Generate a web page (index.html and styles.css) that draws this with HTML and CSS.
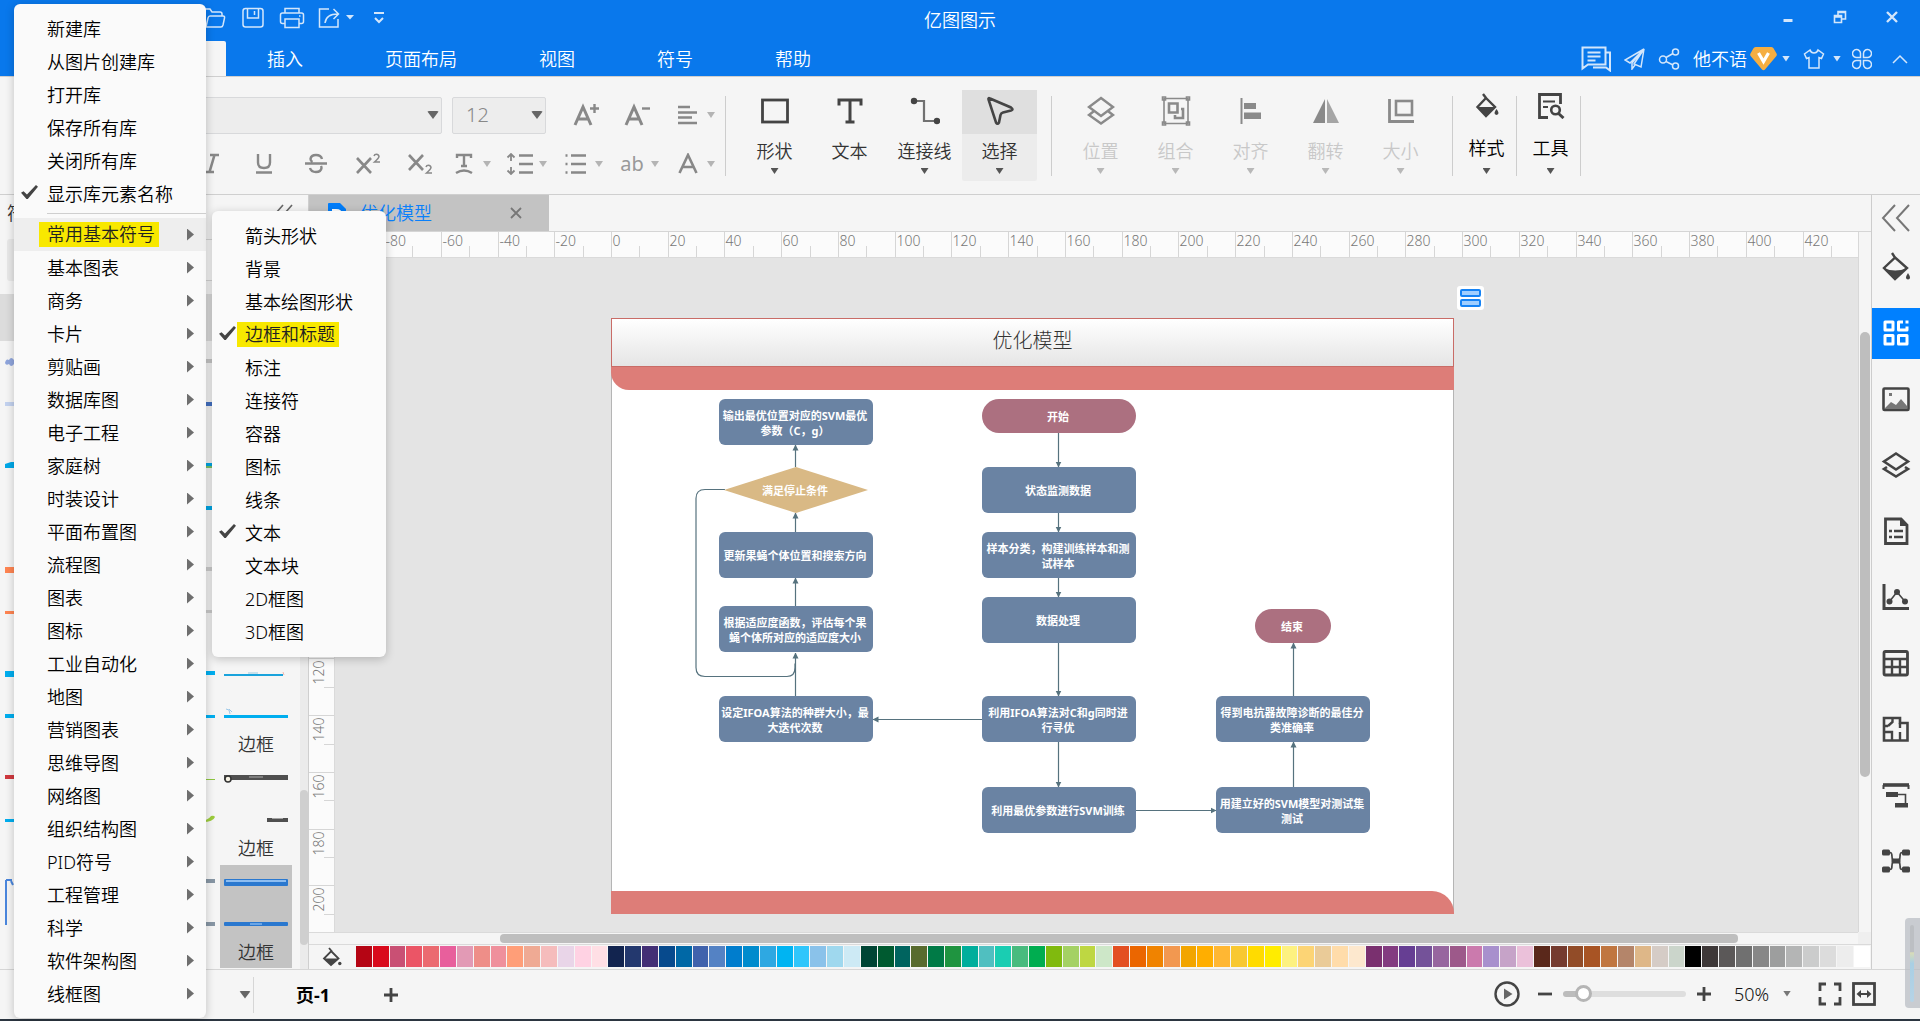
FILE: index.html
```html
<!DOCTYPE html>
<html lang="zh-CN">
<head>
<meta charset="utf-8">
<title>亿图图示</title>
<link rel="stylesheet" href="styles.css">
</head>
<body>
<div class="app">
  <header class="header">
    <div class="titlebar">
      <div class="quick">
        <button class="quick-btn" aria-label="打开"><svg width="24" height="22" viewBox="0 0 24 22"><path d="M2 18V3.500q0-1.500 1.500-1.500H8l2 3h8q2 0 2 2v2M4 20l2-9q.5-2 2-2h13q2 0 1.500 2l-1.500 7q-.5 2-2 2H4q-2 0-2-2"/></svg></button>
        <button class="quick-btn" aria-label="保存"><svg width="24" height="22" viewBox="0 0 24 22"><rect x="2" y="1.500" width="20" height="18.500" rx="2.500"/><path d="M6.500 2v9h11V2M13.500 4v4"/></svg></button>
        <button class="quick-btn" aria-label="打印"><svg width="26" height="22" viewBox="0 0 26 22"><path d="M6 6V1.500h14V6M6 16.500H3.500q-2 0-2-2V8q0-2 2-2h19q2 0 2 2v6.500q0 2-2 2H20M6 12h14v8.500H6zM20 9h1.500"/></svg></button>
        <button class="quick-btn wide" aria-label="导出"><svg width="36" height="22" viewBox="0 0 36 22"><path d="M11 2H1.500v18H20v-8M7 16q1-9 13-9M15.500 2l5 5-5 5"/><path class="solid" d="M28 8h8l-4 4.500z"/></svg></button>
        <button class="quick-btn narrow" aria-label="更多"><svg width="14" height="14" viewBox="0 0 14 14"><path d="M2 2h10M3 7l4 4 4-4" stroke-width="2"/></svg></button>
      </div>
      <h1 class="title">亿图图示</h1>
      <div class="window-btns">
        <button aria-label="最小化"><svg width="14" height="14" viewBox="0 0 14 14"><path d="M2.500 10.500h9" stroke-width="3"/></svg></button>
        <button aria-label="还原"><svg width="14" height="14" viewBox="0 0 14 14"><path d="M1.500 5.500h7v7h-7zM1.500 7h7M5 5V1.500h7.500V9H9M5 2.500h7" stroke-width="1.600"/></svg></button>
        <button aria-label="关闭"><svg width="14" height="14" viewBox="0 0 14 14"><path d="M2 2l10 10M12 2L2 12" stroke-width="2.400"/></svg></button>
      </div>
    </div>
    <div class="tabrow">
      <nav class="tabs">
        <a class="tab active" href="#start" aria-label="开始"></a>
        <a class="tab" href="#insert">插入</a>
        <a class="tab" href="#layout">页面布局</a>
        <a class="tab" href="#view">视图</a>
        <a class="tab" href="#symbol">符号</a>
        <a class="tab" href="#help">帮助</a>
      </nav>
      <div class="account">
        <button aria-label="评论"><svg width="30" height="26" viewBox="0 0 30 26"><path d="M1.500 22.500V1.500h23v17H7zM6.500 6.500h13M6.500 10.500h13M6.500 14.500h8M25 6.500h4v18l-4-3H12" stroke-width="2"/></svg></button>
        <button aria-label="发送"><svg width="21" height="22" viewBox="0 0 21 22"><path d="M20 1L1 12l5 3zM20 1l-3 18-7-3zM8 15v6l3-4M18 3L8 15"/></svg></button>
        <button aria-label="分享"><svg width="22" height="22" viewBox="0 0 22 22"><circle cx="5" cy="11.500" r="3.500"/><circle cx="17.500" cy="4" r="3"/><circle cx="17.500" cy="18" r="3"/><path d="M8 9.500l7-4M8 13.500l7 3.500"/></svg></button>
        <button class="user"><span>他不语</span><svg width="27" height="25" viewBox="0 0 27 25"><path class="gem" d="M6 1h15q1.500 0 2.500 1.300l3 5.200q.8 1.500-.3 2.700L15 23.500q-1.500 1.300-3 0L.8 10.200Q-.3 9 .5 7.500l3-5.200Q4.500 1 6 1z"/><path d="M8.500 7l5 8.500L18.500 7" stroke-width="3.200" class="white"/></svg><i class="caret"></i></button>
        <button class="skin" aria-label="皮肤"><svg width="22" height="22" viewBox="0 0 22 22"><path d="M7 2L1.500 6l2 4.500L6 9.500V20h10V9.500l2.500 1 2-4.500L15 2q-1 3-4 3T7 2z"/></svg><i class="caret"></i></button>
        <button aria-label="应用"><svg width="20" height="22" viewBox="0 0 20 22"><path d="M8.500 9.500H5A4 4 0 1 1 8.500 5.500zM11.500 9.500V5.500A4 4 0 1 1 15 9.500zM8.500 12.500v4A4 4 0 1 1 5 12.500zM11.500 12.500H15a4 4 0 1 1-3.500 4z"/></svg></button>
        <button class="collapse" aria-label="折叠功能区"><svg width="16" height="10" viewBox="0 0 16 10"><path d="M1 9l7-7 7 7"/></svg></button>
      </div>
    </div>
  </header>

  <section class="ribbon" aria-label="开始">
    <div class="font-group">
      <div class="font-row">
        <span class="combo font-name"><select aria-label="字体"><option></option></select><i class="caret big"></i></span>
        <span class="combo font-size"><select aria-label="字号"><option>12</option></select><i class="caret big"></i></span>
        <span class="row-tools first">
          <button class="tool" aria-label="增大字号"><svg width="26" height="24" viewBox="0 0 26 24"><path d="M2 22L10 4l8 18M5 16h10" stroke-width="3"/><path d="M21.500 1v9M17 5.500h9" stroke-width="2.400"/></svg></button>
          <button class="tool" aria-label="减小字号"><svg width="26" height="24" viewBox="0 0 26 24"><path d="M2 22L10 4l8 18M5 16h10" stroke-width="3"/><path d="M18 5.500h8" stroke-width="2.400"/></svg></button>
          <button class="tool drop" aria-label="对齐"><svg width="24" height="20" viewBox="0 0 24 20"><path d="M2 2h12M2 7.500h19M2 12.500h14M2 18h19" stroke-width="2.600"/></svg><i class="caret"></i></button>
        </span>
      </div>
      <div class="font-row second">
        <button class="tool mid" aria-label="斜体"><svg width="22" height="22" viewBox="0 0 22 22"><path d="M9 2h9M4 19h9M13.500 2L8.500 19" stroke-width="2.600"/></svg></button>
        <button class="tool mid" aria-label="下划线"><svg width="22" height="22" viewBox="0 0 22 22"><path d="M5 1v8.500q0 5.500 6 5.500t6-5.500V1M3 19.500h16" stroke-width="2.400"/></svg></button>
        <button class="tool mid" aria-label="删除线"><svg width="24" height="22" viewBox="0 0 24 22"><path d="M18 6q-1-4-6-4T6.500 6q0 2 2 3M1 10.500h22M6 15q1 4 6 4t5.500-4q0-1-.5-2" stroke-width="2.400"/></svg></button>
        <button class="tool mid" aria-label="上标"><svg width="26" height="22" viewBox="0 0 26 22"><path d="M2 5l14 15M16 5L2 20" stroke-width="2.600"/><path d="M19 3q.5-1.700 2.500-1.700T24 3.500Q24 5 19.500 9H25" stroke-width="1.500"/></svg></button>
        <button class="tool mid" aria-label="下标"><svg width="26" height="22" viewBox="0 0 26 22"><path d="M2 2l14 15M16 2L2 17" stroke-width="2.600"/><path d="M19 14q.5-1.700 2.500-1.700t2.500 2.200q0 1.500-4.500 5.500H25" stroke-width="1.500"/></svg></button>
        <span class="row-tools">
          <button class="tool drop" aria-label="文字样式"><svg width="20" height="22" viewBox="0 0 20 22"><path d="M3 5V2h14v3M10 2v11M7 13h6M2 20q8-5 16 0" stroke-width="2.400"/></svg><i class="caret"></i></button>
          <button class="tool drop" aria-label="行距"><svg width="28" height="22" viewBox="0 0 28 22"><path d="M13 2.500h14M13 11h14M13 19.500h14" stroke-width="2.600"/><path d="M5 1v7M5 14v7M1.500 4.500L5 1l3.500 3.500M1.500 17.500L5 21l3.500-3.500" stroke-width="1.800"/></svg><i class="caret"></i></button>
          <button class="tool drop" aria-label="项目符号"><svg width="24" height="22" viewBox="0 0 24 22"><path d="M7 2.500h15M7 11h15M7 19.500h15" stroke-width="2.400"/><path d="M1.500 2.500h2M1.500 11h2M1.500 19.500h2" stroke-width="2.400"/></svg><i class="caret"></i></button>
          <button class="tool drop" aria-label="大小写"><span class="ab">ab</span><i class="caret"></i></button>
          <button class="tool drop" aria-label="文字颜色"><svg width="20" height="22" viewBox="0 0 20 22"><path d="M1.500 20L10 2l8.500 18M4.500 14h11" stroke-width="2.600"/></svg><i class="caret"></i></button>
        </span>
      </div>
    </div>
    <i class="divider"></i>
    <div class="big-group">
      <button class="big"><span class="ico"><svg width="28" height="26" viewBox="0 0 28 26"><rect x="1.500" y="2" width="25" height="22" stroke-width="2.800"/></svg></span><span class="lbl">形状</span><i class="caret"></i></button>
      <button class="big"><span class="ico"><svg width="26" height="26" viewBox="0 0 26 26"><path d="M2 7.500V2h22v5.500M13 2v22M8.500 24h9" stroke-width="3"/></svg></span><span class="lbl">文本</span></button>
      <button class="big"><span class="ico"><svg width="30" height="28" viewBox="0 0 30 28"><path d="M4 4h10v20h10" stroke-width="2.200" class="soft"/><circle class="fill" cx="4" cy="4" r="3.200"/><circle class="fill" cx="27" cy="24" r="3.200"/></svg></span><span class="lbl">连接线</span><i class="caret"></i></button>
      <button class="big on"><span class="ico"><svg width="30" height="30" viewBox="0 0 30 30"><path d="M3.500 3.500Q3 1.500 5 2.500L26 11.500Q29 13.500 26 14.500L18 16.500Q16 17 15.500 19L14 26.500Q12.500 29 11 26.500z" stroke-width="2.600"/></svg></span><span class="lbl">选择</span><i class="caret"></i></button>
    </div>
    <i class="divider"></i>
    <div class="big-group off">
      <button class="big"><span class="ico"><svg width="30" height="30" viewBox="0 0 30 30"><path d="M15 2l12 9-12 9-12-9zM7.500 15.500L3 19l12 8.500L27 19l-4.500-3.500" stroke-width="2.400"/></svg></span><span class="lbl">位置</span><i class="caret"></i></button>
      <button class="big"><span class="ico"><svg width="30" height="30" viewBox="0 0 30 30"><path d="M3 2.500h24v25H3z" stroke-width="1.600"/><path d="M1.500 1h3v3h-3zM25.500 1h3v3h-3zM1.500 26h3v3h-3zM25.500 26h3v3h-3z" stroke-width="1.600"/><path d="M8 7.500h8.500v9H8zM20 13h2v9h-8v-3" stroke-width="2.600"/></svg></span><span class="lbl">组合</span><i class="caret"></i></button>
      <button class="big"><span class="ico"><svg width="26" height="28" viewBox="0 0 26 28"><path d="M3.500 1v26" stroke-width="2"/><rect class="fill" x="6" y="6" width="12" height="6"/><rect class="fill" x="6" y="15.500" width="17" height="6.500"/></svg></span><span class="lbl">对齐</span><i class="caret"></i></button>
      <button class="big"><span class="ico"><svg width="28" height="26" viewBox="0 0 28 26"><path class="fill" d="M13 1v24H1z"/><path class="fill soft" d="M15 1v24h12z"/></svg></span><span class="lbl">翻转</span><i class="caret"></i></button>
      <button class="big"><span class="ico"><svg width="28" height="26" viewBox="0 0 28 26"><path d="M2.500 1v22.500H27" stroke-width="2.800"/><rect x="9" y="3" width="16" height="14" stroke-width="2.600"/></svg></span><span class="lbl">大小</span><i class="caret"></i></button>
    </div>
    <i class="divider"></i>
    <div class="big-group slim">
      <button class="big"><span class="ico"><svg width="26" height="26" viewBox="0 0 26 26"><path d="M9 1l3 4-8.500 9L12 23l9-9-9-9" stroke-width="2.400"/><path class="fill" d="M3.500 14h17L12 23z"/><path class="fill" d="M22.500 16q4 5 0 6-4-1 0-6z"/></svg></span><span class="lbl">样式</span><i class="caret"></i></button>
      <i class="divider"></i>
      <button class="big"><span class="ico"><svg width="28" height="26" viewBox="0 0 28 26"><path d="M11 24.500H2.500v-23h21V11" stroke-width="2.800"/><path d="M6 8.500h12M6 14h5" stroke-width="2.200"/><circle cx="18.500" cy="17" r="4.300" stroke-width="2.600"/><path d="M21.500 20.500l5 4.500" stroke-width="3"/></svg></span><span class="lbl">工具</span><i class="caret"></i></button>
    </div>
    <i class="divider"></i>
  </section>

  <div class="workspace">
    <aside class="library">
      <div class="lib-head"><h2>符号库</h2><button aria-label="收起"><svg width="20" height="18" viewBox="0 0 20 18"><path d="M9 1L2 9l7 8M18 1l-7 8 7 8"/></svg></button></div>
      <div class="lib-search"><button aria-label="库"></button><input type="text" aria-label="搜索"></div>
      <div class="lib-cat"></div>
      <div class="lib-body">
        <div class="cards">
          <div class="card"><svg viewBox="0 0 64 72"><path d="M0 18q1-5 4-3 2-4 5 0 3-2 3 2t-3 2q-3 4-5 0-3 2-4-1" fill="#8fa5dc"/><rect y="57" width="64" height="4" fill="#c3d2ef"/></svg></div>
          <div class="card"></div>
          <div class="card"><svg viewBox="0 0 64 72"><rect y="14" width="64" height="4" fill="#c8c8c8"/><rect y="57" width="64" height="4" fill="#4472c4"/></svg></div>
          <div class="card"></div>

          <div class="card"><svg viewBox="0 0 64 72"><path d="M0 15l6-2h58v6H0z" fill="#00a8e8"/></svg></div>
          <div class="card"></div>
          <div class="card"><svg viewBox="0 0 64 72"><rect y="14" width="64" height="3" fill="#00a8e8"/><rect y="17" width="64" height="2" fill="#7cc36a"/><rect y="57" width="64" height="4" fill="#00a8e8"/></svg></div>
          <div class="card"></div>

          <div class="card"><svg viewBox="0 0 64 72"><rect y="14" width="64" height="6" fill="#ff8552"/><rect y="58" width="64" height="3" fill="#ff8552"/></svg></div>
          <div class="card"></div>
          <div class="card"><svg viewBox="0 0 64 72"><rect y="14" width="64" height="4" fill="#cfcfcf"/><rect y="57" width="64" height="3" fill="#cfcfcf"/></svg></div>
          <div class="card"></div>

          <div class="card"><svg viewBox="0 0 64 72"><rect y="14" width="64" height="6" fill="#00aeef"/><rect y="57" width="64" height="4" fill="#00aeef"/></svg></div>
          <div class="card"></div>
          <div class="card"><svg viewBox="0 0 64 72"><rect y="14" width="64" height="4" fill="#00aeef"/><rect y="58" width="64" height="3" fill="#00aeef"/></svg></div>
          <div class="card"><svg viewBox="0 0 64 72"><rect y="17" width="59" height="2" fill="#1aa3dc"/><path d="M24 16h10" stroke="#9ccbe0"/><path d="M59 15l1 3" stroke="#f0b8b0"/><rect y="58" width="64" height="3" fill="#00aeef"/><path d="M2 52l3 1 1 4M5 52l3 3" stroke="#9cc8e8" fill="none"/></svg><span>边框</span></div>

          <div class="card"><svg viewBox="0 0 64 72"><rect y="14" width="64" height="4" fill="#d0393f"/><rect y="58" width="64" height="3" fill="#00aeef"/></svg></div>
          <div class="card"></div>
          <div class="card"><svg viewBox="0 0 64 72"><rect y="18" width="64" height="1" fill="#8dc63f"/><path d="M52 60q6-2 8-5 3-1 4 1-2 5-12 5" fill="#9ccc3c"/></svg></div>
          <div class="card"><svg viewBox="0 0 64 72"><rect y="14" width="64" height="5" fill="#4f4f4f"/><path d="M25 16h14" stroke="#aaa"/><circle cx="4" cy="18" r="3" fill="#f6f2e4" stroke="#333" stroke-width="1.500"/><rect x="43" y="57" width="21" height="4" fill="#4f4f4f"/><path d="M48 57h11" stroke="#f5f5f5"/></svg><span>边框</span></div>

          <div class="card"><svg viewBox="0 0 64 72"><path d="M1 15v45M1 15h6M6 16l2 4" stroke="#4a86dc" stroke-width="2" fill="none"/></svg></div>
          <div class="card"></div>
          <div class="card"><svg viewBox="0 0 64 72"><rect y="14" width="64" height="4" fill="#8796a4"/><rect y="57" width="64" height="4" fill="#8796a4"/></svg></div>
          <div class="card selected"><svg viewBox="0 0 64 72"><rect y="14" width="64" height="7" rx="1" fill="#2a78cf"/><path d="M2 16h60" stroke="#8dbdf0" stroke-width="2"/><rect y="57" width="64" height="4" rx="1" fill="#2a78cf"/><path d="M26 59h12" stroke="#6aa5e6" stroke-width="2"/></svg><span>边框</span></div>
        </div>
        <div class="lib-track"><div class="lib-thumb"></div></div>
      </div>
    </aside>

    <main class="center">
      <div class="doc-tabs">
        <div class="doc-tab"><svg width="20" height="22" viewBox="0 0 20 22"><path d="M2 1h11l6 6v13q0 1-1 1H2q-1 0-1-1V2q0-1 1-1z" fill="#007dfa"/><path d="M6 8h3q5 0 5 4t-5 4H6z" fill="none" stroke="#fff" stroke-width="2"/></svg><span>优化模型</span><button aria-label="关闭文档"><svg width="12" height="12" viewBox="0 0 12 12"><path d="M1 1l10 10M11 1L1 11"/></svg></button></div>
      </div>
      <div class="stage">
        <svg class="ruler-h" id="ruler-h"></svg>
        <svg class="ruler-v" id="ruler-v"></svg>
        <div class="canvas">
          <div class="sheet">
            <div class="sheet-title">优化模型</div>
            <div class="sheet-band"></div>
            <div class="sheet-foot"></div>
            <svg class="links" width="843" height="596" viewBox="0 0 843 596">
              <defs><marker id="tip" viewBox="0 0 6 8" refX="5.500" refY="4" markerWidth="6" markerHeight="8" markerUnits="userSpaceOnUse" orient="auto"><path d="M0 1l6 3-6 3z"/></marker></defs>
              <path d="M184.500 149V127"/><path d="M184.500 214V195"/><path d="M184.500 288V260"/><path d="M184.500 378V335"/>
              <path class="plain" d="M114 171.500h-20q-9 0-9 9v169q0 9 9 9h82q8 0 8-9v-4"/>
              <path d="M447.500 115v34"/><path d="M447.500 195v19"/><path d="M447.500 260v19"/><path d="M447.500 325v53"/><path d="M447.500 424v45"/>
              <path d="M371 401.500H262"/><path d="M525 492.500h80"/><path d="M682.500 469v-45"/><path d="M682.500 378v-53"/>
            </svg>
            <div class="node n-out">输出最优位置对应的SVM最优参数（C，g）</div>
            <div class="node n-cond">满足停止条件</div>
            <div class="node n-update">更新果蝇个体位置和搜索方向</div>
            <div class="node n-eval">根据适应度函数，评估每个果蝇个体所对应的适应度大小</div>
            <div class="node n-init">设定IFOA算法的种群大小，最大迭代次数</div>
            <div class="node pill n-start">开始</div>
            <div class="node n-monitor">状态监测数据</div>
            <div class="node n-sample">样本分类，构建训练样本和测试样本</div>
            <div class="node n-process">数据处理</div>
            <div class="node n-ifoa">利用IFOA算法对C和g同时进行寻优</div>
            <div class="node n-train">利用最优参数进行SVM训练</div>
            <div class="node n-test">用建立好的SVM模型对测试集测试</div>
            <div class="node n-result">得到电抗器故障诊断的最佳分类准确率</div>
            <div class="node pill n-end">结束</div>
          </div>
          <button class="page-handle" aria-label="页面选项"><i></i><i></i></button>
        </div>
        <div class="vscroll"><div class="vthumb"></div></div>
        <div class="hscroll"><div class="hthumb"></div></div>
        <div class="corner"></div>
      </div>
      <div class="palette">
        <button class="bucket" aria-label="填充"><svg width="20" height="20" viewBox="0 0 20 20"><path d="M7 1l2.500 3L2 11.500 9 18l7.500-6.500L9 4" fill="none" stroke="#444" stroke-width="1.800"/><path d="M2 11.500h14.500L9 18z" fill="#444"/><circle cx="17.800" cy="16.500" r="1.700" fill="#444"/></svg></button>
        <div class="swatches" id="swatches"></div>
      </div>
    </main>

    <aside class="side">
      <button class="expand" aria-label="展开"><svg width="30" height="30" viewBox="0 0 30 30"><path d="M14 2L2 15l12 13M28 2L16 15l12 13" stroke-width="2" stroke="#777"/></svg></button>
      <button aria-label="填充"><svg width="30" height="30" viewBox="0 0 30 30"><path d="M11 1l3 4.500L3 16l11 11 12-11L14 5.500" stroke-width="2.400"/><path class="fill" d="M3 16q11 5 23 0L14 28z"/><path class="fill" d="M27 21q4 6 0 6.500-4-.5 0-6.500z"/></svg></button>
      <button class="on" aria-label="符号库"><svg width="30" height="30" viewBox="0 0 30 30"><path d="M4 4h8v8H4zM22 4h-4.500v8H26V8.500M4 17.500h8V26H4zM17.500 17.500H26V26h-8.500z" stroke-width="3" stroke-linejoin="round"/><path class="fill" d="M24.500 2.500h3v3h-3z"/></svg></button>
      <button aria-label="图片"><svg width="30" height="30" viewBox="0 0 30 30"><rect x="2.500" y="4.500" width="25" height="21.500" rx="1" stroke-width="2.600"/><path class="soft-fill" d="M4 24l6-6 5 3 5-6 6 7v3H4z"/><rect class="soft-fill" x="8" y="9" width="3" height="3"/></svg></button>
      <button aria-label="图层"><svg width="30" height="30" viewBox="0 0 30 30"><path d="M15 3.500l12 8-12 8-12-8zM6 17l-3 2 12 7.500L27 19l-3-2" stroke-width="2.600"/></svg></button>
      <button aria-label="备注"><svg width="30" height="30" viewBox="0 0 30 30"><path d="M4.500 3H20l6 6v18.500H4.500z" stroke-width="2.800"/><path class="fill" d="M19 3v7h7z"/><path d="M8 15h3M13 15h9M8 21h3M13 21h9" stroke-width="2.600"/></svg></button>
      <button aria-label="图表"><svg width="30" height="30" viewBox="0 0 30 30"><path d="M3 2v24.500h25" stroke-width="3"/><path d="M8.500 19.500L16 10l8 9.500" stroke-width="1.600"/><circle class="fill" cx="8.500" cy="19.500" r="3"/><circle class="fill" cx="16" cy="10" r="3"/><circle class="fill" cx="24" cy="19.500" r="3"/></svg></button>
      <button aria-label="表格"><svg width="30" height="30" viewBox="0 0 30 30"><rect x="3" y="3.500" width="23.500" height="23.500" rx="1.500" stroke-width="2.800"/><path d="M3 11h23.500M3 19h23.500M11 11v16M19 11v16" stroke-width="2.400"/></svg></button>
      <button aria-label="平面图"><svg width="30" height="30" viewBox="0 0 30 30"><path d="M3 4h16v5h7.500v17.500H3z" stroke-width="2.600"/><path d="M3 12h4M11.500 4v4l-4.500 4M19 9v5M3 18h8v8M19 18v8" stroke-width="2.400"/></svg></button>
      <button aria-label="甘特图"><svg width="30" height="30" viewBox="0 0 30 30"><path d="M2 5h26" stroke-width="3.600"/><path d="M2.500 5v4M27.500 5v4" stroke-width="2"/><rect class="fill" x="5" y="12" width="12" height="5"/><path d="M17 14.500h7.500V23" stroke-width="1.600"/><rect class="fill" x="14" y="23" width="13" height="4.500"/></svg></button>
      <button aria-label="思维导图"><svg width="30" height="30" viewBox="0 0 30 30"><path d="M6 6.500h3q2 0 2 4t3 4.500q-3 .5-3 4.500t-2 4H6M24 6.500h-3q-2 0-2 4t-3 4.500q3 .5 3 4.500t2 4h3" stroke-width="1.700"/><rect class="fill" x="1" y="3.500" width="8" height="6" rx="1.500"/><rect class="fill" x="21" y="3.500" width="8" height="6" rx="1.500"/><rect class="fill" x="1" y="20.500" width="8" height="6" rx="1.500"/><rect class="fill" x="21" y="20.500" width="8" height="6" rx="1.500"/><rect class="fill" x="10.500" y="12.500" width="9" height="5" rx="1.500"/></svg></button>
    </aside>
  </div>

  <footer class="status">
    <button class="page-list" aria-label="页面列表"><i class="caret big"></i></button>
    <button class="page-tab">页-1</button>
    <button class="page-add" aria-label="添加页面"><svg width="16" height="16" viewBox="0 0 16 16"><path d="M8 1v14M1 8h14"/></svg></button>
    <div class="zoom">
      <button class="play" aria-label="播放"><svg width="26" height="26" viewBox="0 0 26 26"><circle cx="13" cy="13" r="11.500"/><path d="M10 7.500l8.500 5.500-8.500 5.500z" fill="#666" stroke="none"/></svg></button>
      <button aria-label="缩小"><svg width="16" height="16" viewBox="0 0 16 16"><path d="M1 8h14"/></svg></button>
      <input type="range" min="0" max="100" value="11" aria-label="缩放">
      <button aria-label="放大"><svg width="16" height="16" viewBox="0 0 16 16"><path d="M8 1v14M1 8h14"/></svg></button>
      <span class="zoom-value"><select aria-label="缩放比例"><option>50%</option></select><i class="caret"></i></span>
      <button aria-label="全屏"><svg width="24" height="24" viewBox="0 0 24 24"><path d="M2 9V2h6M16 2h6v7M22 15v7h-6M8 22H2v-7"/></svg></button>
      <button class="fit" aria-label="适应宽度"><svg width="24" height="24" viewBox="0 0 24 24"><rect x="1.500" y="1.500" width="21" height="21"/><path d="M8 12h8" stroke-width="2"/><path d="M9 8v8l-4.500-4zM15 8v8l4.500-4z" fill="#444" stroke="none"/></svg></button>
    </div>
  </footer>
  <div class="taskbar"></div>

  <div class="meter" aria-hidden="true"><div class="meter-bar"></div></div>

  <div class="menu main-menu" role="menu">
    <button class="item">新建库</button>
    <button class="item">从图片创建库</button>
    <button class="item">打开库</button>
    <button class="item">保存所有库</button>
    <button class="item">关闭所有库</button>
    <button class="item checked">显示库元素名称</button>
    <hr>
    <button class="item sub hover"><mark>常用基本符号</mark></button>
    <button class="item sub">基本图表</button>
    <button class="item sub">商务</button>
    <button class="item sub">卡片</button>
    <button class="item sub">剪贴画</button>
    <button class="item sub">数据库图</button>
    <button class="item sub">电子工程</button>
    <button class="item sub">家庭树</button>
    <button class="item sub">时装设计</button>
    <button class="item sub">平面布置图</button>
    <button class="item sub">流程图</button>
    <button class="item sub">图表</button>
    <button class="item sub">图标</button>
    <button class="item sub">工业自动化</button>
    <button class="item sub">地图</button>
    <button class="item sub">营销图表</button>
    <button class="item sub">思维导图</button>
    <button class="item sub">网络图</button>
    <button class="item sub">组织结构图</button>
    <button class="item sub">PID符号</button>
    <button class="item sub">工程管理</button>
    <button class="item sub">科学</button>
    <button class="item sub">软件架构图</button>
    <button class="item sub">线框图</button>
  </div>
  <div class="menu sub-menu" role="menu">
    <button class="item">箭头形状</button>
    <button class="item">背景</button>
    <button class="item">基本绘图形状</button>
    <button class="item checked"><mark>边框和标题</mark></button>
    <button class="item">标注</button>
    <button class="item">连接符</button>
    <button class="item">容器</button>
    <button class="item">图标</button>
    <button class="item">线条</button>
    <button class="item checked">文本</button>
    <button class="item">文本块</button>
    <button class="item">2D框图</button>
    <button class="item">3D框图</button>
  </div>
</div>
<script src="app.js"></script>
</body>
</html>
```
FILE: styles.css
```css
* { box-sizing: border-box; }

body {
  margin: 0;
  font-family: "Noto Sans", "Noto Sans CJK SC", sans-serif;
  font-size: 18px;
  font-weight: 350;
  line-height: 24px;
  color: #111;
  background: #f5f5f5;
}

button, select, input {
  font: inherit;
  color: inherit;
  margin: 0;
  padding: 0;
  border: 0;
  border-radius: 0;
  background: none;
  appearance: none;
}

h1, h2 { margin: 0; font-size: 18px; font-weight: inherit; }
svg { display: block; flex: none; }

.app {
  position: relative;
  display: flex;
  flex-direction: column;
  min-height: 100vh;
  overflow: hidden;
}

.caret {
  flex: none;
  width: 8px;
  height: 6px;
  background: currentColor;
  clip-path: polygon(0 0, 100% 0, 50% 100%);
}
.caret.big { width: 12px; height: 8px; color: #666; }

/* Header */
.header { background: #0978ec; color: #fff; }
.header svg { fill: none; stroke: #d3e6fb; stroke-width: 1.5; }
.header .solid { fill: #d3e6fb; stroke: none; }
.header .white { stroke: #fff; }
.header .gem { fill: #f5ae42; stroke: none; }
.header .caret { color: #d3e6fb; }

.titlebar {
  display: grid;
  grid-template-columns: 1fr auto 1fr;
  height: 41px;
}
.quick { display: flex; padding-left: 194px; height: 36px; }
.quick-btn { width: 39px; display: flex; align-items: center; justify-content: center; }
.quick-btn.wide { width: 50px; }
.quick-btn.narrow { width: 36px; }
.title { line-height: 40px; }
.window-btns { display: flex; justify-content: flex-end; height: 34px; padding-right: 2px; }
.window-btns button { width: 52px; display: flex; align-items: center; justify-content: center; }

.tabrow { display: flex; justify-content: space-between; height: 35px; }
.tabs { display: flex; padding-left: 108px; }
.tab { padding: 0 41px; line-height: 37px; color: #fff; text-decoration: none; }
.tab.active { width: 118px; background: #f5f5f5; border-top-right-radius: 2px; }
.account { display: flex; align-items: center; gap: 13px; padding-right: 12px; }
.user, .skin { display: flex; align-items: center; gap: 8px; }
.user { gap: 5px; }
.user span { margin-right: -2px; }
.skin { margin-right: -2px; }
.collapse { margin-left: 7px; }

/* Ribbon */
.ribbon {
  display: flex;
  align-items: flex-start;
  height: 119px;
  padding-top: 13px;
  border-top: 1px solid #cfcfcf;
  border-bottom: 1px solid #cfcfcf;
}
.ribbon svg { fill: none; stroke: currentColor; }
.ribbon .fill { fill: currentColor; stroke: none; }
.ribbon .soft { opacity: .75; }
.divider { flex: none; width: 1px; height: 80px; margin-top: 6px; background: #cdcdcd; }

.font-group { width: 725px; padding: 6px 10px 0 14px; color: #888; }
.font-row { display: flex; align-items: center; height: 38px; }
.font-row.second { justify-content: flex-end; margin-top: 10px; height: 40px; }
.combo {
  display: flex;
  align-items: center;
  height: 37px;
  padding-right: 2px;
  background: #ededed;
  border: 1px solid #d8d9db;
  border-radius: 2px;
}
.combo select { flex: 1; min-width: 0; height: 35px; font-size: 20px; }
.font-name { width: 428px; margin-right: 10px; }
.font-size { width: 94px; padding-left: 13px; }
.row-tools { display: flex; gap: 14px; margin-left: 3px; }
.row-tools.first { gap: 21px; margin-left: auto; }
.tool { display: flex; align-items: center; justify-content: center; width: 30px; height: 30px; }
.tool.mid { width: 52px; }
.tool.drop { width: 42px; display: grid; grid-template-columns: 30px 8px; column-gap: 4px; justify-items: center; }
.tool .caret { color: #b4b4b4; }
.ab { font-size: 20px; font-weight: 400; color: #999; }

.big-group { display: flex; padding: 0 14px 0 11px; color: #444; }
.big {
  display: flex;
  flex-direction: column;
  align-items: center;
  width: 75px;
  height: 91px;
  border-radius: 2px;
}
.ico { display: flex; align-items: center; justify-content: center; width: 100%; height: 44px; padding-bottom: 2px; }
.lbl { margin: 5px 0; line-height: 24px; white-space: nowrap; color: #333; }
.big .caret { color: #555; }
.big.on { background: #ececec; }
.big.on .ico { background: #dfdfdf; }
.off { color: #8a8a8a; }
.off .lbl { color: #c8c8c8; }
.off .caret { color: #b8b8b8; }
.slim { padding: 0; }
.slim .big { width: 63px; padding-left: 4px; }
.slim .ico { height: 33px; }
.slim .lbl { margin: 13px 0 8px; color: #000; }

/* Symbol library */
.workspace { display: flex; flex: 1; min-height: 774px; }
.library {
  display: flex;
  flex-direction: column;
  width: 309px;
  border-right: 1px solid #cfcfcf;
}
.lib-head {
  display: flex;
  justify-content: space-between;
  align-items: center;
  height: 36px;
  padding: 0 14px 0 7px;
  color: #333;
}
.lib-head svg { fill: none; stroke: #666; stroke-width: 1.6; }
.lib-search { display: flex; margin: 8px 9px 13px 7px; height: 42px; }
.lib-search button { width: 60px; background: #e8e8e8; border-radius: 3px; }
.lib-search input { flex: 1; min-width: 0; border: 1px solid #d5d5d5; background: #f8f8f8; }
.lib-cat { height: 47px; background: #dcdcdc; }
.lib-body { display: flex; flex: 1; justify-content: space-between; }
.cards {
  display: grid;
  grid-template-columns: repeat(4, 72px);
  column-gap: 1px;
  grid-auto-rows: 103px;
  row-gap: 1px;
  padding: 4px 0 0 1px;
}
.card {
  display: flex;
  flex-direction: column;
  align-items: center;
  line-height: 30px;
  color: #333;
}
.card svg { width: 64px; height: 72px; }
.card.selected { background: #c3c3c3; }
.lib-track { display: flex; align-items: flex-end; width: 8px; padding-bottom: 24px; background: #ebebeb; }
.lib-thumb { width: 8px; height: 155px; border-radius: 4px; background: #cfcfcf; }

/* Drawing area */
.center { display: flex; flex-direction: column; flex: 1; min-width: 0; }
.doc-tabs { height: 37px; border-bottom: 1px solid #d5d5d5; }
.doc-tab {
  display: flex;
  align-items: center;
  width: 240px;
  height: 36px;
  padding: 0 27px 0 18px;
  background: #c3c3c3;
  color: #0a80fa;
}
.doc-tab span { margin-left: 13px; }
.doc-tab button { margin-left: auto; }
.doc-tab button svg { fill: none; stroke: #777; stroke-width: 1.8; }

.stage {
  display: grid;
  flex: 1;
  grid-template-columns: 26px 1fr 13px;
  grid-template-rows: 26px 1fr 13px;
}
.ruler-h { grid-area: 1 / 1 / 2 / 3; width: 100%; height: 26px; background: #fbfbfb; border-bottom: 1px solid #dadada; }
.ruler-v { grid-area: 2 / 1; width: 26px; height: 100%; background: #fbfbfb; border-right: 1px solid #dadada; }
.ruler-h line, .ruler-v line { stroke: #d6d6d6; shape-rendering: crispEdges; }
.ruler-h text, .ruler-v text { font-size: 14px; fill: #777; }
.canvas { grid-area: 2 / 2; position: relative; overflow: hidden; background: #e4e4e4; }
.vscroll { grid-area: 1 / 3 / 3 / 4; padding: 100px 1px 0; border-left: 1px solid #d8d8d8; }
.vthumb { height: 445px; border-radius: 5px; background: #bebebe; }
.hscroll { grid-area: 3 / 1 / 4 / 3; padding: 1px 120px 0 191px; border-top: 1px solid #dadada; border-bottom: 1px solid #dadada; }
.hthumb { height: 9px; border-radius: 4px; background: #bebebe; }
.corner { grid-area: 3 / 3; background: #efefef; border-bottom: 1px solid #dadada; }

.palette { display: flex; height: 24px; padding: 1px 1px 2px 13px; }
.bucket { width: 20px; margin-right: 14px; }
.swatches { display: flex; flex: 1; gap: 1px; }
.swatches i { flex: 1; }

/* Sheet and flowchart */
.sheet {
  position: absolute;
  left: 276px;
  top: 60px;
  width: 843px;
  height: 596px;
  background: #fff;
  border: 1px solid #b5b5b5;
  border-bottom: 0;
}
.sheet-title {
  height: 49px;
  margin: -1px -1px 0;
  border: 1px solid #c96c67;
  background: linear-gradient(#fff, #e5e5e5);
  text-align: center;
  font-size: 20px;
  font-weight: 300;
  line-height: 44px;
  color: #333;
}
.sheet-band { height: 23px; margin: 0 -1px; background: #dd7d78; border-bottom-left-radius: 18px; }
.sheet-foot {
  position: absolute;
  left: -1px;
  right: -1px;
  bottom: 0;
  height: 23px;
  background: #dd7d78;
  border-top-right-radius: 22px;
}
.links { position: absolute; left: -1px; top: -1px; }
.links path { fill: none; stroke: #56727e; stroke-width: 1.2; marker-end: url(#tip); }
.links .plain, .links marker path { marker-end: none; }
.links marker path { fill: #56727e; stroke: none; }

.node {
  position: absolute;
  display: flex;
  align-items: center;
  justify-content: center;
  width: 154px;
  height: 46px;
  padding: 1px 3px 0 1px;
  border-radius: 6px;
  background: #6a83a3;
  color: #fff;
  font-size: 11px;
  font-weight: 700;
  line-height: 15px;
  text-align: center;
}
.node.pill { height: 34px; border-radius: 17px; background: #ac7080; }
.n-out { left: 107px; top: 80px; }
.n-cond { left: 112px; top: 148px; width: 144px; border-radius: 0; background: #d9b985; clip-path: polygon(50% 0, 100% 50%, 50% 100%, 0 50%); }
.n-update { left: 107px; top: 213px; }
.n-eval { left: 107px; top: 287px; }
.n-init { left: 107px; top: 377px; }
.n-start { left: 370px; top: 80px; }
.n-monitor { left: 370px; top: 148px; }
.n-sample { left: 370px; top: 213px; }
.n-process { left: 370px; top: 278px; }
.n-ifoa { left: 370px; top: 377px; }
.n-train { left: 370px; top: 468px; }
.n-test { left: 604px; top: 468px; }
.n-result { left: 604px; top: 377px; }
.n-end { left: 643px; top: 290px; width: 76px; }

.page-handle {
  position: absolute;
  left: 1122px;
  top: 28px;
  display: flex;
  flex-direction: column;
  gap: 2px;
  width: 27px;
  padding: 3px;
  border-radius: 3px;
  background: #fff;
}
.page-handle i { height: 8px; border: 2px solid #1583f5; border-radius: 2px; background: #9fceff; }

/* Right tool strip */
.side {
  display: flex;
  flex-direction: column;
  gap: 15px;
  width: 49px;
  border-left: 1px solid #cdcdcd;
  color: #444;
}
.side button { display: flex; align-items: center; height: 51px; padding: 0 0 2px 9px; }
.side .expand { height: 47px; margin-bottom: -15px; }
.side .on { background: #0080ff; color: #fff; }
.side svg { fill: none; stroke: currentColor; }
.side .fill { fill: currentColor; stroke: none; }
.side .soft-fill { fill: #777; stroke: none; }

/* Status bar */
.status { display: flex; align-items: center; height: 50px; border-top: 1px solid #d6d6d6; }
.status svg { fill: none; stroke: #444; stroke-width: 2.8; }
.page-list { display: flex; align-items: center; justify-content: flex-end; width: 254px; height: 36px; padding-right: 2px; border-right: 1px solid #d6d6d6; }
.page-tab { margin-left: 42px; font-weight: 700; color: #000; }
.page-add { margin-left: 53px; }
.zoom { display: flex; align-items: center; gap: 10px; margin-left: auto; padding: 0 44px 2px 0; }
.play { margin-right: 7px; }
.play svg { stroke-width: 2.4; }
.zoom input { width: 123px; height: 16px; }
.zoom input::-webkit-slider-runnable-track {
  height: 6px;
  border-radius: 3px;
  background: linear-gradient(90deg, #bcbcbc 20px, #dedede 20px);
}
.zoom input::-webkit-slider-thumb {
  appearance: none;
  width: 17px;
  height: 17px;
  margin-top: -6px;
  border: 3px solid #b5b5b5;
  border-radius: 50%;
  background: #fff;
}
.zoom-value { display: flex; align-items: center; margin: 0 17px 0 12px; }
.zoom-value select { width: 49px; height: 26px; }
.zoom-value .caret { color: #777; }
.taskbar { height: 2px; background: #2b3540; }

.meter {
  position: absolute;
  right: 0;
  bottom: 13px;
  width: 15px;
  height: 90px;
  padding: 7px 0 6px 5px;
  border-radius: 4px 0 0 4px;
  background: rgba(185, 190, 196, .75);
}
.meter-bar { width: 4px; height: 100%; background: linear-gradient(#bcbfc3 35%, #d9dcb8 36%, #a9cfe4 50%, #b6d3e6); border-radius: 2px; }

/* Menus */
.menu {
  position: absolute;
  display: flex;
  flex-direction: column;
  background: #fafafa;
  border-radius: 6px;
  box-shadow: 0 2px 10px rgba(0, 0, 0, .22);
  color: #000;
}
.main-menu { left: 14px; top: 4px; width: 192px; padding: 8px 0; }
.sub-menu { left: 212px; top: 211px; width: 174px; padding: 8px 0 9px; }
.item {
  position: relative;
  display: flex;
  align-items: center;
  justify-content: space-between;
  height: 33px;
  padding: 0 12px 0 33px;
  text-align: left;
  white-space: nowrap;
}
.item.hover { background: #eee; }
.item.sub::after {
  content: "";
  width: 7px;
  height: 12px;
  background: #6e6e6e;
  clip-path: polygon(0 0, 100% 50%, 0 100%);
}
.item.checked::before {
  content: "";
  position: absolute;
  left: 7px;
  top: 8px;
  width: 17px;
  height: 14px;
  background: #444;
  clip-path: polygon(0 55%, 15% 45%, 35% 68%, 88% 0, 100% 12%, 40% 100%, 32% 100%);
}
.menu hr { width: 159px; margin: 3px 0 4px 33px; border: 0; border-top: 1px solid #cfcfcf; }
mark { margin-left: -8px; padding: 0 4px 0 8px; line-height: 25px; background: #f8e800; color: #222; }
```
FILE: app.js
```js
const SVG_NS = 'http://www.w3.org/2000/svg';
const PX_PER_UNIT = 2.837;

function add(parent, name, attrs, text) {
  const el = document.createElementNS(SVG_NS, name);
  for (const key in attrs) el.setAttribute(key, attrs[key]);
  if (text !== undefined) el.textContent = text;
  parent.appendChild(el);
}

function drawHorizontal(svg, origin, from, to) {
  for (let v = from; v <= to; v += 10) {
    const x = Math.round(origin + v * PX_PER_UNIT) + 0.5;
    const major = v % 20 === 0;
    add(svg, 'line', { x1: x, x2: x, y1: major ? 0 : 14, y2: 26 });
    if (major) add(svg, 'text', { x: x + 1, y: 14 }, v);
  }
}

function drawVertical(svg, origin, from, to) {
  for (let v = from; v <= to; v += 10) {
    const y = Math.round(origin + v * PX_PER_UNIT) + 0.5;
    const major = v % 20 === 0;
    add(svg, 'line', { y1: y, y2: y, x1: major ? 0 : 15, x2: 26 });
    if (major) add(svg, 'text', { transform: `translate(15 ${y + 2}) rotate(-90)`, 'text-anchor': 'end' }, v);
  }
}

drawHorizontal(document.getElementById('ruler-h'), 302, -80, 430);
drawVertical(document.getElementById('ruler-v'), 60, 120, 210);

const colors = `
b50514 d90a1c c95074 eb5566 eb6a70 e85f9c e29ab5 ee8e88 ef909c ff9e78 efaa94 f5bcbc e9d5e8 ffd2e3 ffdfe5
12244f 23386e 432f75 074a8d 0068a6 4062ac 5482c4 007dcd 008bcd 2ea8e2 00b4f2 30c6fb 8ac2ea 9fd8ee cdeaf5
004534 005a30 00645f 586b2e 007a46 1f9440 00ae9c 50bfc0 1acdb2 48bb7e 00ad50 80ba0e a4d164 bed742 cde7c8
e34f22 eb6600 f08300 f29850 f2a500 ffae00 ffb733 f8c831 ffdb00 ffec00 fdf180 fcd475 eacb98 ffdcaa fde8ce
7a306f 833b80 663e93 745299 97669f 9d598a cb7aad a890cd c6a3c8 ebc1da
5a281b 753b2f 924c28 a85424 c07640 b4856a deb788 d5ccc6 cbd5cb
000000 3e3838 5b5858 707070 878787 9d9e9e b4b5b5 cbcccc dcdcdc ededed ffffff`.trim().split(/\s+/);

const swatches = document.getElementById('swatches');
for (const color of colors) {
  const cell = document.createElement('i');
  cell.style.background = '#' + color;
  swatches.appendChild(cell);
}
```
